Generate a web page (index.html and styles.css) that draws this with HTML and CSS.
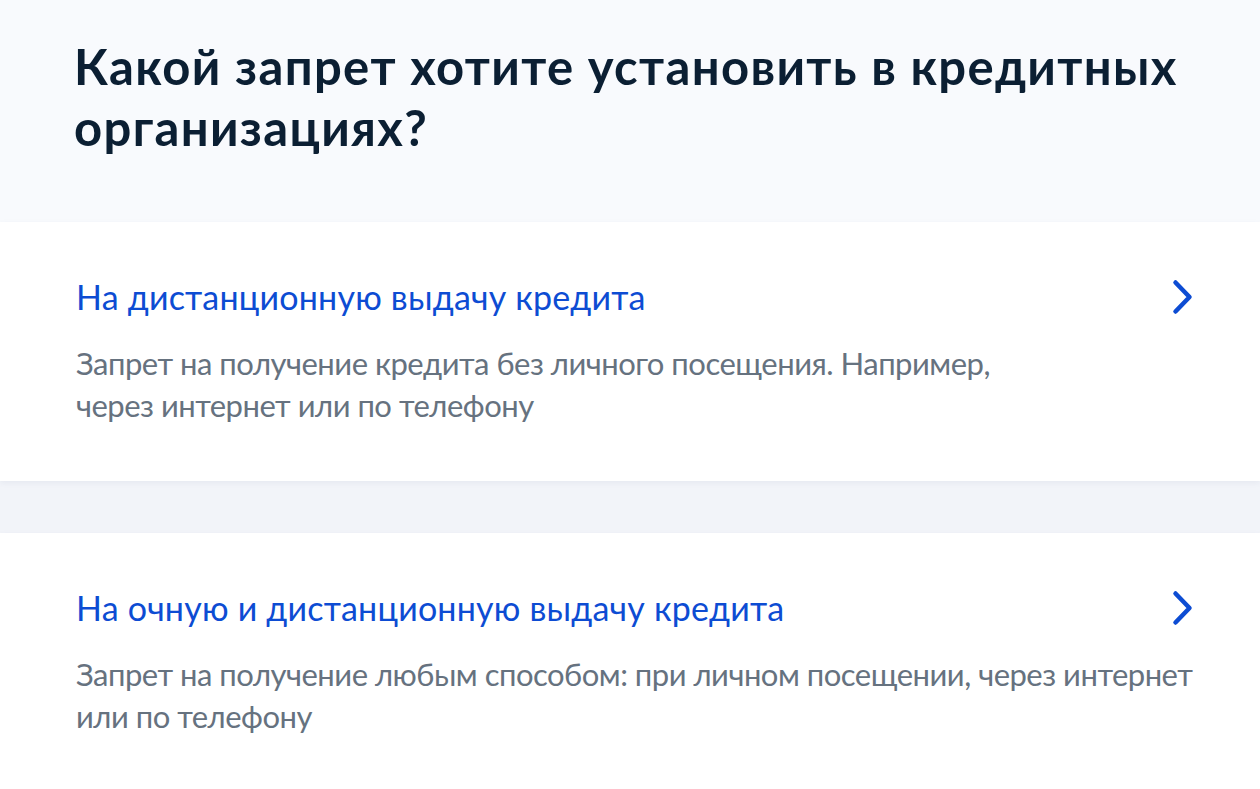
FILE: index.html
```html
<!DOCTYPE html>
<html lang="ru">
<head>
  <meta charset="UTF-8">
  <meta name="viewport" content="width=device-width, initial-scale=1.0">
  <title>Запрет на кредиты</title>
  <link rel="stylesheet" href="styles.css">
</head>
<body>

  <header class="page-head">
    <h1>Какой запрет хотите установить в кредитных организациях?</h1>
  </header>

  <ul class="options">
    <li class="option">
      <div class="option-head">
        <a class="option-title" href="#">На дистанционную выдачу кредита</a>
        <svg class="chevron" width="22" height="36" viewBox="0 0 22 36" aria-hidden="true">
          <path d="M3.5 3.5 L17.5 18 L3.5 32.5" />
        </svg>
      </div>
      <p class="option-text">Запрет на получение кредита без личного посещения. Например,<br>через интернет или по телефону</p>
    </li>
    <li class="option">
      <div class="option-head">
        <a class="option-title" href="#">На очную и дистанционную выдачу кредита</a>
        <svg class="chevron" width="22" height="36" viewBox="0 0 22 36" aria-hidden="true">
          <path d="M3.5 3.5 L17.5 18 L3.5 32.5" />
        </svg>
      </div>
      <p class="option-text">Запрет на получение любым способом: при личном посещении, через интернет или по телефону</p>
    </li>
  </ul>

</body>
</html>
```

FILE: styles.css
```css
body {
  font-family: 'Lato', 'Noto Sans', sans-serif;
  background-color: #f2f4f9;
  margin: 0;
  padding: 0;
  color: #0b1f33;
}

.page-head {
  background-color: #f8fafd;
  padding: 36px 60px 64px 74px;
}

h1 {
  margin: 0;
  font-size: 49px;
  line-height: 61px;
  font-weight: 700;
  letter-spacing: 1.35px;
  color: #0b1f33;
}

.options {
  list-style: none;
  margin: 0;
  padding: 0;
  display: flex;
  flex-direction: column;
  gap: 52px;
}

.option {
  background-color: #fff;
  padding: 53px 67px 55px 76px;
  box-shadow: 0 2px 6px rgba(30, 50, 110, 0.06);
}

.option:last-child {
  padding-bottom: 90px;
}

.option-head {
  display: flex;
  align-items: center;
  justify-content: space-between;
}

.option-title {
  font-size: 34px;
  line-height: 44px;
  letter-spacing: 0.2px;
  color: #0d4cd3;
  text-decoration: none;
}

.chevron {
  flex-shrink: 0;
  fill: none;
  stroke: #0d4cd3;
  stroke-width: 4.5;
  stroke-linecap: round;
  stroke-linejoin: round;
  margin-right: -1px;
}

.option-text {
  margin: 23px -20px 0 0;
  font-size: 31px;
  line-height: 42px;
  letter-spacing: -0.5px;
  color: #66727f;
}
```
